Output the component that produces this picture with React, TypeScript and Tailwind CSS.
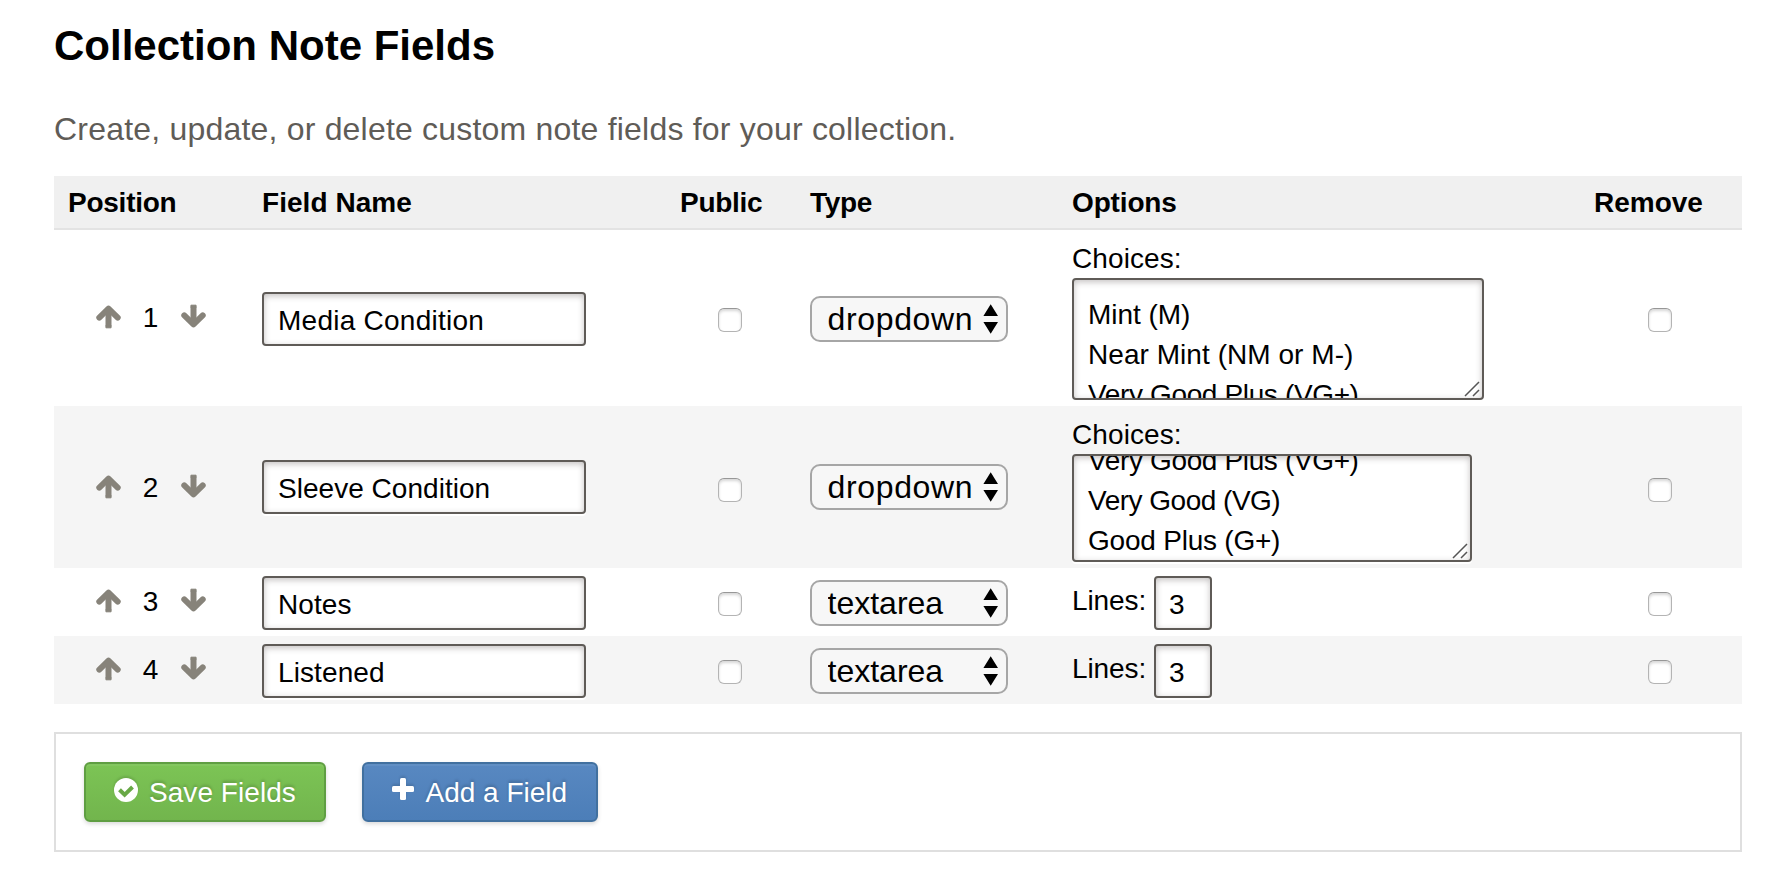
const CHOICES = [
  { text: 'Mint (M)', spacing: 'tracking-[-0.05px]' },
  { text: 'Near Mint (NM or M-)', spacing: 'tracking-[0.05px]' },
  { text: 'Very Good Plus (VG+)', spacing: 'tracking-[-0.36px]' },
  { text: 'Very Good (VG)', spacing: 'tracking-[-0.5px]' },
  { text: 'Good Plus (G+)', spacing: 'tracking-[-0.22px]' },
];

const COLUMNS = 'grid grid-cols-[208px_418px_130px_262px_522px_148px]';

const FIELD =
  'box-border rounded-[4px] border-2 border-[#5f5b57] bg-white text-black shadow-[inset_0_2px_6px_rgba(60,50,50,0.3),0_2px_0_#ffffff] outline-none';

type Field = {
  position: number;
  name: string;
  nameSpacing: string;
  type: 'dropdown' | 'textarea';
  height: string;
  boxSize?: string;
  firstChoice?: number;
  scroll?: string;
  numberShift: string;
  controlShift: string;
  checkShift: string;
};

const FIELDS: Field[] = [
  {
    position: 1,
    name: 'Media Condition',
    nameSpacing: 'tracking-[0.25px]',
    type: 'dropdown',
    height: 'h-[176px]',
    boxSize: 'w-[412px] h-[122px]',
    firstChoice: 0,
    scroll: 'mt-[15px]',
    numberShift: 'mt-0',
    controlShift: 'mt-0.5',
    checkShift: 'mt-1',
  },
  {
    position: 2,
    name: 'Sleeve Condition',
    nameSpacing: 'tracking-[0.03px]',
    type: 'dropdown',
    height: 'h-[162px]',
    boxSize: 'w-[400px] h-[108px]',
    firstChoice: 2,
    scroll: '-mt-[15px]',
    numberShift: 'mt-0.5',
    controlShift: 'mt-0',
    checkShift: 'mt-1.5',
  },
  {
    position: 3,
    name: 'Notes',
    nameSpacing: 'tracking-[0.1px]',
    type: 'textarea',
    height: 'h-[68px]',
    numberShift: 'mt-0',
    controlShift: 'mt-0.5',
    checkShift: 'mt-1',
  },
  {
    position: 4,
    name: 'Listened',
    nameSpacing: 'tracking-[0.1px]',
    type: 'textarea',
    height: 'h-[68px]',
    numberShift: 'mt-0',
    controlShift: 'mt-0.5',
    checkShift: 'mt-1',
  },
];

function Arrow({ down = false }: { down?: boolean }) {
  return (
    <svg
      viewBox="0 0 25 24"
      className={down ? 'mb-1 h-6 w-[25px] rotate-180' : 'mb-0.5 h-6 w-[25px]'}
      fill="none"
      stroke="#87837a"
      strokeLinejoin="round"
    >
      <path d="M3.3 12.6 12.5 3.7l9.2 8.9" strokeWidth="6" strokeLinecap="round" />
      <path d="M12.5 5v16.5" strokeWidth="6" />
      <path d="M9.9 20.5h5.2v2.4H9.9z" fill="#87837a" strokeWidth="0.8" />
      <path d="M12.5 1 6 7.5h13z" fill="#87837a" strokeWidth="1" />
    </svg>
  );
}

function Checkbox({ className }: { className: string }) {
  return (
    <input
      type="checkbox"
      className={`h-6 w-6 appearance-none rounded-[6px] border border-[#b4b4b4] border-t-[#979797] bg-white shadow-[inset_0_2px_3px_rgba(0,0,0,0.16)] ${className}`}
    />
  );
}

function TypeSelect({ value, className }: { value: string; className: string }) {
  return (
    <div className={`relative h-[46px] w-[198px] ${className}`}>
      <select
        defaultValue={value}
        className={`h-full w-full appearance-none rounded-[10px] border-2 border-[#a6a6a6] bg-[#f7f7f7] pl-[15.5px] text-[32px] leading-[42px] text-black ${
          value === 'dropdown' ? 'tracking-[0.65px]' : 'tracking-normal'
        }`}
      >
        <option>dropdown</option>
        <option>textarea</option>
      </select>
      <svg viewBox="0 0 16 30" className="pointer-events-none absolute top-2 right-[9px] h-[30px] w-4">
        <path d="M7.7 0.3 15 12H0.4zM7.7 29.7 15 18H0.4z" />
      </svg>
    </div>
  );
}

function ChoicesBox({ size, first, scroll }: { size: string; first: number; scroll: string }) {
  return (
    <div className="flex flex-col pt-[9px]">
      <span className="text-[28px] leading-[39px] tracking-[0.1px]">Choices:</span>
      <div className={`relative ${size}`}>
        <div
          role="textbox"
          aria-multiline="true"
          className={`h-full w-full overflow-hidden px-3.5 text-[28px] leading-10 whitespace-nowrap ${FIELD}`}
        >
          <div className={scroll}>
            {CHOICES.slice(first, first + 3).map((choice) => (
              <div key={choice.text} className={choice.spacing}>
                {choice.text}
              </div>
            ))}
          </div>
        </div>
        <svg
          viewBox="0 0 16 16"
          className="absolute right-1 bottom-[3px] h-4 w-4"
          stroke="#555555"
          strokeWidth="1.5"
        >
          <path d="M1 15 15 1M9 15l6-6" />
        </svg>
      </div>
    </div>
  );
}

function Row({ field }: { field: Field }) {
  return (
    <div className={`${COLUMNS} items-center even:bg-[#f5f5f5] ${field.height}`}>
      <div className={`flex items-center pl-[41.5px] ${field.numberShift}`}>
        <Arrow />
        <span className="w-[60px] text-center text-[28px] leading-8">{field.position}</span>
        <Arrow down />
      </div>
      <input
        type="text"
        defaultValue={field.name}
        className={`h-[54px] w-[324px] px-3.5 pt-1 text-[28px] ${FIELD} ${field.nameSpacing} ${field.controlShift}`}
      />
      <Checkbox className={`ml-[38px] ${field.checkShift}`} />
      <TypeSelect value={field.type} className={field.controlShift} />
      {field.type === 'dropdown' ? (
        <div className="self-start">
          <ChoicesBox size={field.boxSize ?? ''} first={field.firstChoice ?? 0} scroll={field.scroll ?? ''} />
        </div>
      ) : (
        <div className={`flex items-center ${field.controlShift}`}>
          <span className="-mt-1 w-[82px] text-[28px] leading-8 tracking-[-0.1px]">Lines:</span>
          <input type="text" defaultValue="3" className={`h-[54px] w-[58px] pt-1 pr-3 pl-[13px] text-[28px] ${FIELD}`} />
        </div>
      )}
      <Checkbox className={`ml-[54px] ${field.checkShift}`} />
    </div>
  );
}

const BUTTON =
  'flex h-[60px] items-center rounded-[6px] border-2 text-[28px] leading-8 text-white [text-shadow:0_-2px_3px_rgba(0,0,0,0.2)]';

export default function App() {
  return (
    <main className="h-[892px] bg-white pr-12 pl-[54px] font-['Liberation_Sans',Arial,sans-serif] text-black">
      <h1 className="pt-[22px] text-[42px] leading-[48px] font-bold">Collection Note Fields</h1>
      <p className="mt-[39px] text-[32px] leading-10 tracking-[0.2px] text-[#5f5c57]">
        Create, update, or delete custom note fields for your collection.
      </p>

      <section className="mt-[27px]">
        <header
          className={`${COLUMNS} h-[54px] border-b-2 border-[#e3e3e3] bg-[#f0f0f0] text-[28px] leading-[54px] font-bold tracking-[-0.15px]`}
        >
          <span className="pl-3.5 tracking-[-0.25px]">Position</span>
          <span className="tracking-[0.05px]">Field Name</span>
          <span className="tracking-[-0.3px]">Public</span>
          <span className="tracking-[-0.3px]">Type</span>
          <span>Options</span>
          <span className="tracking-normal">Remove</span>
        </header>
        <div>
          {FIELDS.map((field) => (
            <Row key={field.position} field={field} />
          ))}
        </div>
      </section>

      <footer className="mt-7 flex h-[120px] items-center gap-9 border-2 border-[#dfdfdf] pl-7">
        <button
          className={`${BUTTON} w-[242px] border-[#5f9e42] bg-linear-to-b from-[#7cc455] to-[#72b54d] pl-7 shadow-[inset_0_2px_0_rgba(255,255,255,0.06),0_2px_4px_rgba(0,0,0,0.15)]`}
        >
          <svg viewBox="0 0 24 24" className="mr-[11px] -mt-1 h-6 w-6 drop-shadow-[0_-2px_1px_rgba(0,0,0,0.12)]">
            <circle cx="12" cy="12" r="12" fill="#ffffff" />
            <path
              d="M5.5 11.8l5.1 5L18.5 9"
              fill="none"
              stroke="#68a846"
              strokeWidth="4"
              strokeLinejoin="miter"
            />
          </svg>
          <span className="pt-0.5 tracking-[0.05px]">Save Fields</span>
        </button>
        <button
          className={`${BUTTON} w-[236px] border-[#41709f] bg-linear-to-b from-[#5888c1] to-[#4c7eb8] pl-7 shadow-[inset_0_2px_0_rgba(255,255,255,0.06),0_2px_4px_rgba(0,0,0,0.15)]`}
        >
          <svg
            viewBox="0 0 22 22"
            className="mr-[11.5px] -mt-1.5 h-[22px] w-[22px] drop-shadow-[0_-2px_1px_rgba(0,0,0,0.12)]"
            fill="#ffffff"
          >
            <rect x="8" y="0" width="6" height="22" rx="1.5" />
            <rect x="0" y="8" width="22" height="6" rx="1.5" />
          </svg>
          <span className="pt-0.5">Add a Field</span>
        </button>
      </footer>
    </main>
  );
}
